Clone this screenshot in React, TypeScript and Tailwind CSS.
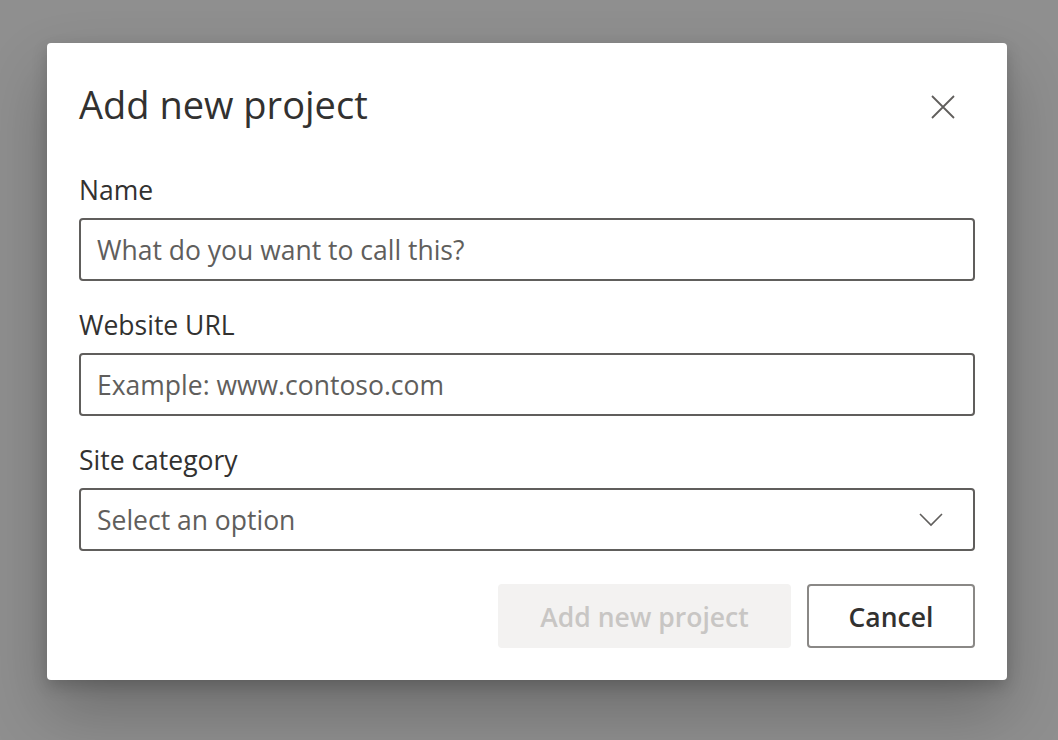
import React from "react";

export default function App() {
  const font = { fontFamily: '"Open Sans", "Noto Sans", sans-serif' };
  return (
    <div
      className="w-full h-[740px] bg-[#8f8f8f] flex justify-start items-start pt-[43px] pl-[47px]"
      style={font}
    >
      <div className="w-[960px] h-[637px] bg-white rounded-[4px] shadow-[0_32px_64px_rgba(0,0,0,0.24),0_6px_16px_rgba(0,0,0,0.18)] px-[32px] pt-[37px] flex flex-col">
        <div className="flex items-start justify-between">
          <h1 className="text-[38px] leading-[48px] text-[#323130] font-normal">Add new project</h1>
          <button className="mt-[15px] mr-[20px] w-[24px] h-[24px] flex items-center justify-center text-[#605e5c]">
            <svg width="24" height="24" viewBox="0 0 24 24" fill="none" stroke="currentColor" strokeWidth="1.8">
              <path d="M1 1 L23 23 M23 1 L1 23" />
            </svg>
          </button>
        </div>

        <label className="block text-[26.5px] leading-[32px] text-[#323130] mt-[46px] mb-[12px]">Name</label>
        <div className="h-[63px] border-2 border-[#605e5c] rounded-[4px] flex items-center px-[16px] pt-[3px] text-[26.5px] text-[#605e5c]">
          What do you want to call this?
        </div>

        <label className="block text-[26.5px] leading-[32px] text-[#323130] mt-[28px] mb-[12px]">Website URL</label>
        <div className="h-[63px] border-2 border-[#605e5c] rounded-[4px] flex items-center px-[16px] pt-[3px] text-[26.5px] text-[#605e5c]">
          Example: www.contoso.com
        </div>

        <label className="block text-[26.5px] leading-[32px] text-[#323130] mt-[28px] mb-[12px]">Site category</label>
        <div className="h-[63px] border-2 border-[#605e5c] rounded-[4px] flex items-center justify-between pl-[16px] pr-[30px] text-[26.5px] text-[#605e5c]">
          <span className="pt-[3px]">Select an option</span>
          <svg width="24" height="14" viewBox="0 0 24 14" fill="none" stroke="currentColor" strokeWidth="1.6">
            <path d="M1 1 L12 12 L23 1" />
          </svg>
        </div>

        <div className="flex justify-end gap-[16px] mt-[33px]">
          <button className="w-[293px] h-[64px] rounded-[4px] bg-[#f3f2f1] text-[#c8c6c4] text-[26.5px] font-semibold pt-[3px]">
            Add new project
          </button>
          <button className="w-[168px] h-[64px] rounded-[4px] border-2 border-[#8a8886] bg-white text-[#323130] text-[26.5px] font-semibold pt-[3px]">
            Cancel
          </button>
        </div>
      </div>
    </div>
  );
}
